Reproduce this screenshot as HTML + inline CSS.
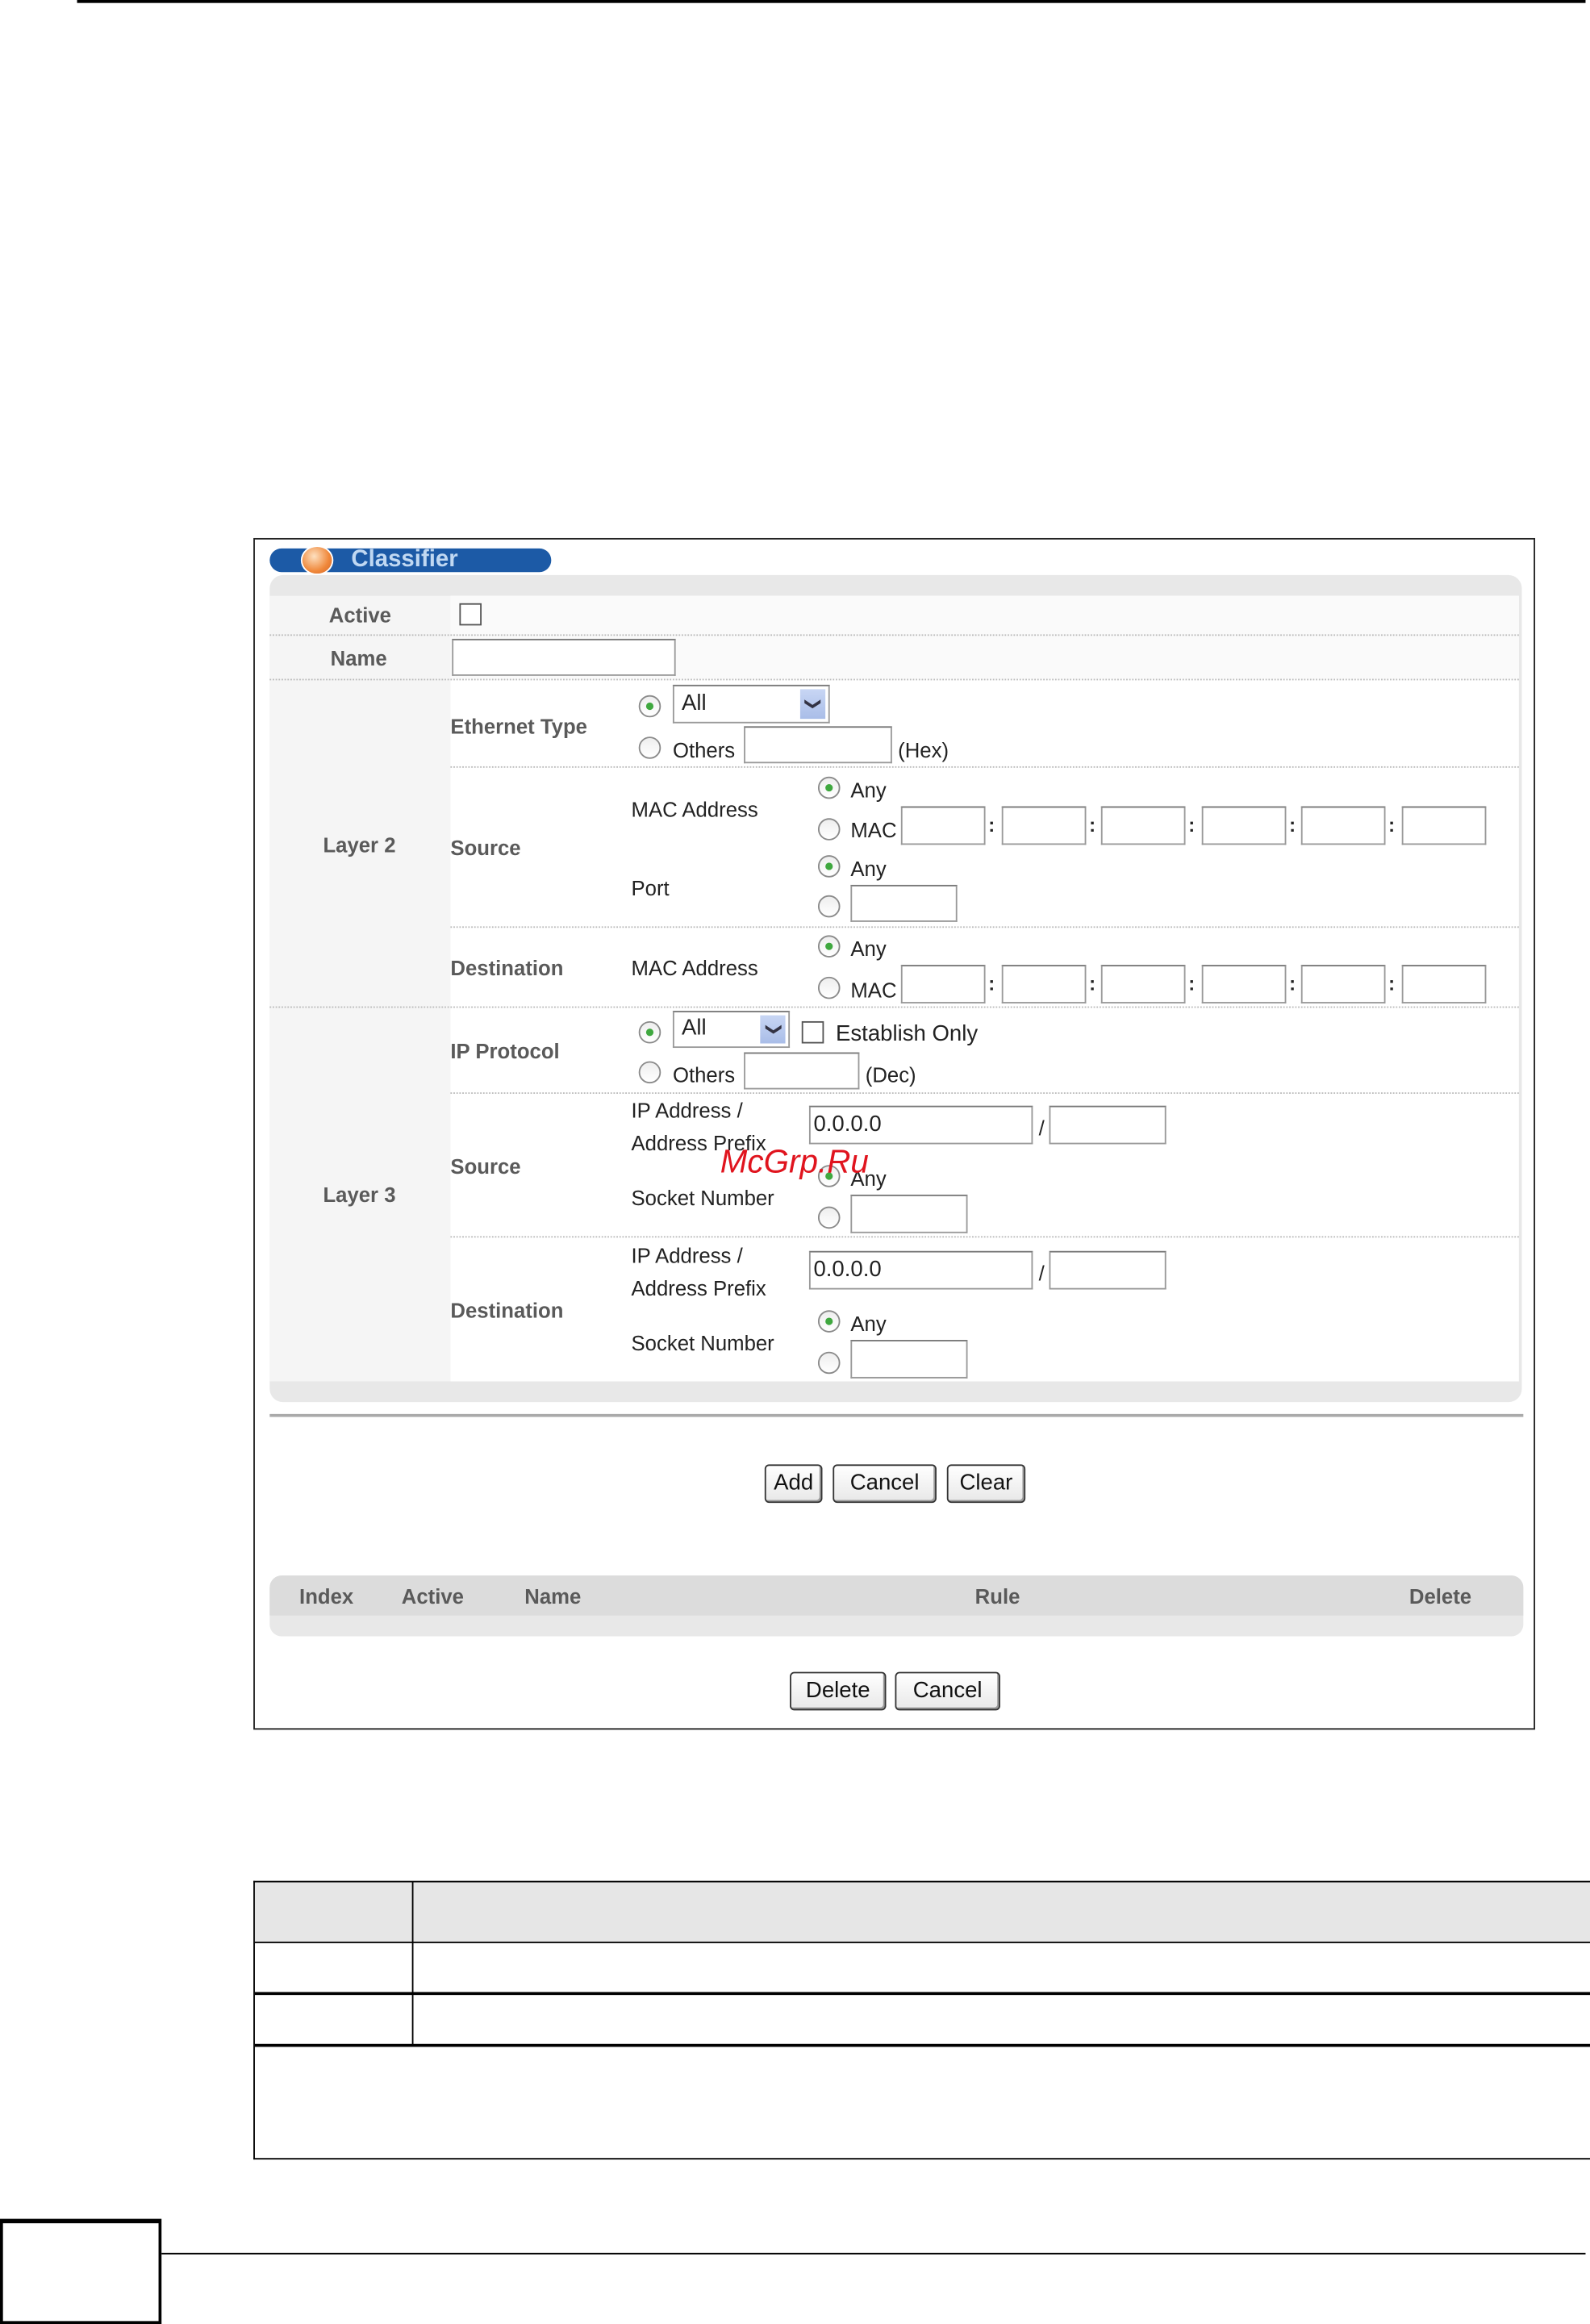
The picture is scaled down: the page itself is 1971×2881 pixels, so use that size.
<!DOCTYPE html>
<html><head><meta charset="utf-8"><style>
html,body{margin:0;padding:0;background:#fff;}
body{width:1971px;height:2881px;overflow:hidden;position:relative;}
#w{position:absolute;left:0;top:0;width:1073px;height:1568px;transform:scale(1.8369,1.8374);transform-origin:0 0;font-family:"Liberation Sans",Arial,sans-serif;}
#w div,#w span{position:absolute;box-sizing:border-box;}
.b{font-weight:bold;color:#5a5a5a;font-size:14px;line-height:16px;white-space:nowrap;}
.t{color:#222;font-size:14px;line-height:16px;white-space:nowrap;}
.dl{height:0;border-top:1px dotted #bbb;}
.r{width:15px;height:15px;border-radius:50%;border:1.5px solid #8a8a8a;background:linear-gradient(#eee,#fff);}
.r.c::after{content:"";position:absolute;left:3.5px;top:3.5px;width:5px;height:5px;border-radius:50%;background:#3fa83f;}
.i{border:1px solid #999;border-top-color:#777;background:#fff;height:26px;}
.cl{font-size:13px;font-weight:bold;color:#222;}
.btn{border:1px solid #333;border-radius:3px;background:linear-gradient(#fff,#e8e8e8);height:26px;font-size:15px;line-height:24px;text-align:center;color:#111;box-shadow:inset -1px -1px 0 #999;}
.ar{display:block;transform:rotate(90deg);}
</style></head><body><div id="w">
<div style="left:52px;top:0;width:1018px;height:1.6px;background:#000"></div>

<div style="left:171px;top:363px;width:865px;height:804px;border:1px solid #222"></div>
<div style="left:182px;top:370px;width:190px;height:16px;border-radius:8px;background:#1c5aa6"></div>
<div style="left:203px;top:368px;width:22px;height:20px;border-radius:50%;background:radial-gradient(circle at 40% 35%,#fde0c0,#f0883a 60%,#d0642a);border:1px solid #fff"></div>
<span style="left:237px;top:369px;font-size:16px;font-weight:bold;color:#c0d8f2;line-height:18px">Classifier</span>

<div style="left:182px;top:388px;width:845px;height:558px;border-radius:9px;background:#e8e8e8"></div>
<div style="left:182px;top:402px;width:843px;height:530px;background:#f5f5f5"></div>
<div style="left:304px;top:402px;width:721px;height:530px;background:#fff"></div>
<div style="left:304px;top:402px;width:721px;height:56px;background:#fafafa"></div>

<div class="dl" style="left:182px;top:428px;width:843px"></div>
<div class="dl" style="left:182px;top:458px;width:843px"></div>
<div class="dl" style="left:304px;top:517px;width:721px"></div>
<div class="dl" style="left:304px;top:625px;width:721px"></div>
<div class="dl" style="left:182px;top:679px;width:843px"></div>
<div class="dl" style="left:304px;top:737px;width:721px"></div>
<div class="dl" style="left:304px;top:834px;width:721px"></div>

<span class="b" style="left:222px;top:407px">Active</span>
<div style="left:310px;top:407px;width:15px;height:15px;border:1.5px solid #555;background:#fff"></div>
<span class="b" style="left:223px;top:436px">Name</span>
<div class="i" style="left:305px;top:431px;width:151px;height:25px"></div>
<span class="b" style="left:218px;top:562px">Layer 2</span>
<span class="b" style="left:218px;top:798px">Layer 3</span>

<span class="b" style="left:304px;top:482px">Ethernet Type</span>
<span class="b" style="left:304px;top:564px">Source</span>
<span class="b" style="left:304px;top:645px">Destination</span>
<span class="b" style="left:304px;top:701px">IP Protocol</span>
<span class="b" style="left:304px;top:779px">Source</span>
<span class="b" style="left:304px;top:876px">Destination</span>

<div class="r c" style="left:431px;top:469px"></div>
<div class="i" style="left:454px;top:462px;width:106px"><span class="t" style="left:5px;top:4px;font-size:15px">All</span><div style="right:2px;top:2px;width:17px;height:20px;background:linear-gradient(#c8d6f4,#a9bde8);color:#334;font-size:11px;text-align:center;line-height:20px"><span class="ar" style="position:static">&#10095;</span></div></div>
<div class="r" style="left:431px;top:497px"></div>
<span class="t" style="left:454px;top:498px">Others</span>
<div class="i" style="left:502px;top:490px;width:100px;height:25px"></div>
<span class="t" style="left:606px;top:498px">(Hex)</span>

<span class="t" style="left:426px;top:538px">MAC Address</span>
<span class="t" style="left:426px;top:591px">Port</span>
<span class="t" style="left:426px;top:645px">MAC Address</span>
<div class="r c" style="left:552px;top:524px"></div><span class="t" style="left:574px;top:525px">Any</span>
<div class="r" style="left:552px;top:552px"></div><span class="t" style="left:574px;top:552px">MAC</span>
<div class="r c" style="left:552px;top:577px"></div><span class="t" style="left:574px;top:578px">Any</span>
<div class="r" style="left:552px;top:604px"></div>
<div class="i" style="left:574px;top:597px;width:72px;height:25px"></div>
<div class="r c" style="left:552px;top:631px"></div><span class="t" style="left:574px;top:632px">Any</span>
<div class="r" style="left:552px;top:659px"></div><span class="t" style="left:574px;top:660px">MAC</span>

<div class="i" style="left:608px;top:544px;width:57px"></div><span class="cl" style="left:667px;top:549px">:</span>
<div class="i" style="left:676px;top:544px;width:57px"></div><span class="cl" style="left:735px;top:549px">:</span>
<div class="i" style="left:743px;top:544px;width:57px"></div><span class="cl" style="left:802px;top:549px">:</span>
<div class="i" style="left:811px;top:544px;width:57px"></div><span class="cl" style="left:870px;top:549px">:</span>
<div class="i" style="left:878px;top:544px;width:57px"></div><span class="cl" style="left:937px;top:549px">:</span>
<div class="i" style="left:946px;top:544px;width:57px"></div>

<div class="i" style="left:608px;top:651px;width:57px"></div><span class="cl" style="left:667px;top:656px">:</span>
<div class="i" style="left:676px;top:651px;width:57px"></div><span class="cl" style="left:735px;top:656px">:</span>
<div class="i" style="left:743px;top:651px;width:57px"></div><span class="cl" style="left:802px;top:656px">:</span>
<div class="i" style="left:811px;top:651px;width:57px"></div><span class="cl" style="left:870px;top:656px">:</span>
<div class="i" style="left:878px;top:651px;width:57px"></div><span class="cl" style="left:937px;top:656px">:</span>
<div class="i" style="left:946px;top:651px;width:57px"></div>

<div class="r c" style="left:431px;top:689px"></div>
<div class="i" style="left:454px;top:682px;width:79px;height:25px"><span class="t" style="left:5px;top:3px;font-size:15px">All</span><div style="right:2px;top:2px;width:17px;height:19px;background:linear-gradient(#c8d6f4,#a9bde8);color:#334;font-size:11px;text-align:center;line-height:19px"><span class="ar" style="position:static">&#10095;</span></div></div>
<div style="left:541px;top:689px;width:15px;height:15px;border:1.5px solid #555;background:#fff"></div>
<span class="t" style="left:564px;top:690px;font-size:15px">Establish Only</span>
<div class="r" style="left:431px;top:716px"></div>
<span class="t" style="left:454px;top:717px">Others</span>
<div class="i" style="left:502px;top:710px;width:78px;height:25px"></div>
<span class="t" style="left:584px;top:717px">(Dec)</span>

<span class="t" style="left:426px;top:741px">IP Address /</span>
<span class="t" style="left:426px;top:763px">Address Prefix</span>
<div class="i" style="left:546px;top:746px;width:151px"><span class="t" style="left:2px;top:4px;font-size:15px">0.0.0.0</span></div>
<span class="t" style="left:701px;top:753px">/</span>
<div class="i" style="left:708px;top:746px;width:79px"></div>
<span class="t" style="left:426px;top:800px">Socket Number</span>
<div class="r c" style="left:552px;top:786px"></div><span class="t" style="left:574px;top:787px">Any</span>
<div class="r" style="left:552px;top:814px"></div>
<div class="i" style="left:574px;top:806px;width:79px"></div>

<span class="t" style="left:426px;top:839px">IP Address /</span>
<span class="t" style="left:426px;top:861px">Address Prefix</span>
<div class="i" style="left:546px;top:844px;width:151px"><span class="t" style="left:2px;top:4px;font-size:15px">0.0.0.0</span></div>
<span class="t" style="left:701px;top:851px">/</span>
<div class="i" style="left:708px;top:844px;width:79px"></div>
<span class="t" style="left:426px;top:898px">Socket Number</span>
<div class="r c" style="left:552px;top:884px"></div><span class="t" style="left:574px;top:885px">Any</span>
<div class="r" style="left:552px;top:912px"></div>
<div class="i" style="left:574px;top:904px;width:79px"></div>

<span style="left:486px;top:771px;font-size:22px;font-style:italic;color:#e0141e;line-height:26px">McGrp.Ru</span>

<div style="left:182px;top:954px;width:846px;height:2px;background:#aaa"></div>
<div class="btn" style="left:516px;top:988px;width:39px">Add</div>
<div class="btn" style="left:562px;top:988px;width:70px">Cancel</div>
<div class="btn" style="left:639px;top:988px;width:53px">Clear</div>

<div style="left:182px;top:1063px;width:846px;height:41px;border-radius:8px;background:#e8e8e8"></div>
<div style="left:182px;top:1063px;width:846px;height:27px;border-radius:8px 8px 0 0;background:#dcdcdc"></div>
<span class="b" style="left:202px;top:1069px">Index</span>
<span class="b" style="left:271px;top:1069px">Active</span>
<span class="b" style="left:354px;top:1069px">Name</span>
<span class="b" style="left:658px;top:1069px">Rule</span>
<span class="b" style="left:951px;top:1069px">Delete</span>
<div class="btn" style="left:533px;top:1128px;width:65px">Delete</div>
<div class="btn" style="left:604px;top:1128px;width:71px">Cancel</div>

<div style="left:171px;top:1269px;width:902px;height:188px;border:1.5px solid #000;border-right:none"></div>
<div style="left:172px;top:1270px;width:901px;height:40px;background:#e6e6e6"></div>
<div style="left:172px;top:1310px;width:901px;height:1px;background:#000"></div>
<div style="left:172px;top:1344px;width:901px;height:1.6px;background:#000"></div>
<div style="left:172px;top:1379px;width:901px;height:1.6px;background:#000"></div>
<div style="left:278px;top:1270px;width:1px;height:110px;background:#000"></div>

<div style="left:0;top:1497px;width:109px;height:71px;border:2.2px solid #000;border-top-width:3px"></div>
<div style="left:109px;top:1520px;width:961px;height:1.4px;background:#000"></div>
</div></body></html>
